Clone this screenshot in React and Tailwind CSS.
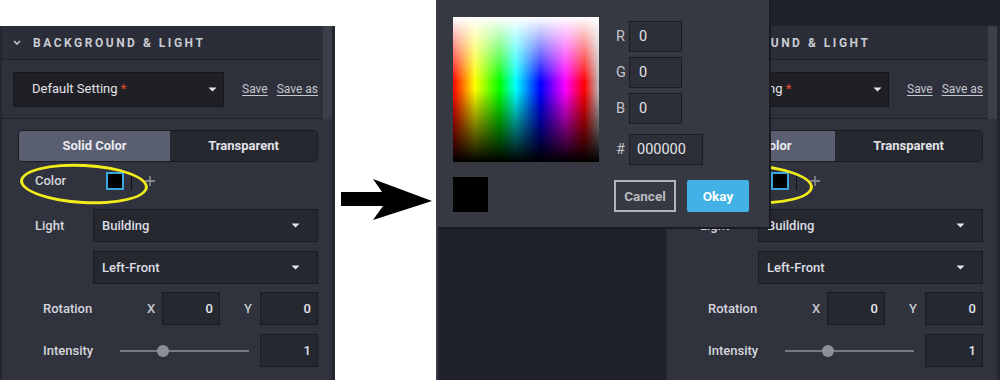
import React from "react";

function Caret() {
    return (
        <svg width="9" height="5" viewBox="0 0 9 5" className="shrink-0">
            <path d="M0.5 0.5 H8.5 L4.5 4.5 Z" fill="#e6e7ec" />
        </svg>
    );
}

function Select({ label, className }) {
    return (
        <div
            className={`flex items-center justify-between h-[33px] pl-2 pr-[17px] bg-[#262830] border border-[#1a1b21] text-[13px] font-medium text-[#dcdde3] ${className}`}
        >
            <span>{label}</span>
            <Caret />
        </div>
    );
}

function NumberBox({ value, className }) {
    return (
        <div
            className={`flex items-center justify-end h-[33px] pr-[6px] bg-[#262830] border border-[#1a1b21] text-[13px] font-medium text-[#e4e5ea] ${className}`}
        >
            {value}
        </div>
    );
}

function Panel() {
    return (
        <div className="relative w-[335px] h-[354px] bg-[#30323d] border-l-2 border-r-[3px] border-[#24262f] font-['Roboto',sans-serif] overflow-hidden">
            {/* header */}
            <div className="flex items-center h-[34px] bg-[#2b2d38] border-b border-[#1f2029]">
                <svg width="8" height="5" viewBox="0 0 8 5" className="ml-[11px] mr-[12px]">
                    <path d="M1 1 L4 4 L7 1" stroke="#c9cbd2" strokeWidth="1.5" fill="none" />
                </svg>
                <span className="text-[12px] font-bold tracking-[0.21em] text-[#c9cbd2]">
                    BACKGROUND &amp; LIGHT
                </span>
            </div>

            {/* preset */}
            <div className="flex items-center h-[59px] bg-[#2e303b] border-b border-[#1f2029]">
                <div className="flex items-center justify-between ml-[11px] w-[211px] h-[35px] pl-[18px] pr-[6px] bg-[#1f2026] border border-[#17181d] text-[13px] text-[#e2e3e8]">
                    <span>
                        Default Setting <span className="text-[#e2492e]">*</span>
                    </span>
                    <Caret />
                </div>
                <span className="ml-[18px] text-[12px] text-[#c4c6cd] underline underline-offset-2">Save</span>
                <span className="ml-[9px] text-[12px] text-[#c4c6cd] underline underline-offset-2">Save as</span>
            </div>

            {/* body */}
            <div className="relative flex flex-col pt-[11px]">
                <div className="flex ml-[16px] w-[300px] h-[32px] rounded-[4px] border border-[#1b1c22] overflow-hidden text-[13px] font-bold">
                    <div className="flex items-center justify-center w-[151px] bg-[#5a5e71] text-[#e8e9ee]">
                        Solid Color
                    </div>
                    <div className="flex items-center justify-center flex-1 bg-[#262830] text-[#e2e3e8]">
                        Transparent
                    </div>
                </div>

                <div className="flex items-center mt-[10px] h-[18px] pl-[33px] text-[13px] font-medium text-[#d5d6dc]">
                    <span className="w-[71px]">Color</span>
                    <div className="w-[18px] h-[18px] border-2 border-[#3aa8de] bg-black" />
                    <div className="ml-[7px] w-[1px] h-[17px] bg-[#111217]" />
                    <svg width="10" height="10" viewBox="0 0 10 10" className="ml-[13px]">
                        <path d="M5 0 V10 M0 5 H10" stroke="#9a9ca3" strokeWidth="1.3" />
                    </svg>
                </div>

                <div className="flex items-center mt-[19px] pl-[33px] text-[13px] font-medium text-[#d5d6dc]">
                    <span className="w-[58px]">Light</span>
                    <Select label="Building" className="w-[225px]" />
                </div>

                <div className="flex mt-[9px] pl-[91px]">
                    <Select label="Left-Front" className="w-[225px]" />
                </div>

                <div className="flex items-center mt-[8px] pl-[41px] text-[13px] font-medium text-[#d5d6dc]">
                    <span className="w-[104px]">Rotation</span>
                    <span className="w-[15px] text-[#c4c6cd]">X</span>
                    <NumberBox value="0" className="w-[58px]" />
                    <span className="w-[40px] pl-[24px] text-[#c4c6cd]">Y</span>
                    <NumberBox value="0" className="w-[58px]" />
                </div>

                <div className="flex items-center mt-[9px] pl-[41px] text-[13px] font-medium text-[#d5d6dc]">
                    <span className="w-[77px]">Intensity</span>
                    <div className="relative flex items-center w-[129px] h-[12px]">
                        <div className="w-full h-[2px] bg-[#777982]" />
                        <div className="absolute left-[37px] w-[12px] h-[12px] rounded-full bg-[#8d8f96]" />
                    </div>
                    <NumberBox value="1" className="ml-[11px] w-[58px]" />
                </div>

                {/* annotation */}
                <div className="absolute left-[18px] top-[45px] w-[128px] h-[40px] rounded-[50%] border-[3px] border-[#f3ec1c] rotate-[3deg]" />
            </div>

            {/* scrollbar */}
            <div className="absolute right-0 top-0 w-[9px] h-[93px] bg-[#3c3e4a]" />
        </div>
    );
}

function ColorPicker() {
    return (
        <div className="absolute left-0 top-0 w-[333px] h-[229px] bg-[#363842] border-b-2 border-r-2 border-[#1b1c23] flex pl-[15px] pt-[17px] font-['Roboto',sans-serif]">
            <div className="flex flex-col gap-[15px] w-[146px]">
                <div className="w-[146px] h-[145px] bg-[linear-gradient(to_bottom,#ffffff_0%,rgba(255,255,255,0)_45%,rgba(0,0,0,0)_50%,#000000_100%),linear-gradient(to_right,#ff0000_0%,#ffff00_15%,#00ff00_32%,#00ffff_43%,#0000ff_60%,#ff00ff_77%,#ff0000_90%,#bbbbbb_100%)]" />
                <div className="w-[35px] h-[35px] bg-black" />
            </div>
            <div className="flex flex-col ml-[15px] pt-[4px] text-[14.5px] text-[#e2e3e8]">
                {["R", "G", "B"].map((c) => (
                    <div key={c} className="flex items-center mb-[5px]">
                        <span className="w-[15px] pl-[2px] text-[#c2c4cb]">{c}</span>
                        <div className="flex items-center w-[53px] h-[31px] pl-[9px] bg-[#2d2f38] border border-[#1c1d23]">0</div>
                    </div>
                ))}
                <div className="flex items-center mt-[5px]">
                    <span className="w-[15px] pl-[2px] text-[#c2c4cb]">#</span>
                    <div className="flex items-center w-[74px] h-[31px] pl-[7px] bg-[#2d2f38] border border-[#1c1d23]">000000</div>
                </div>
                <div className="flex mt-[15px] gap-[11px] text-[13.5px] font-bold">
                    <div className="flex items-center justify-center w-[62px] h-[32px] border-2 border-[#b3b5bb] text-[#b9bbc1]">
                        Cancel
                    </div>
                    <div className="flex items-center justify-center w-[62px] h-[32px] rounded-[2px] bg-[#41b1e6] text-white">
                        Okay
                    </div>
                </div>
            </div>
        </div>
    );
}

export default function App() {
    return (
        <div className="flex w-[1000px] h-[380px] bg-white overflow-hidden">
            <div className="w-[335px] pt-[26px] shrink-0">
                <Panel />
            </div>

            <div className="w-[101px] shrink-0">
                <svg width="101" height="380" viewBox="0 0 101 380">
                    <polygon points="6,192 47,192 38,179 97,201 38,220 48,206 6,206" fill="#000" />
                </svg>
            </div>

            <div className="relative flex justify-end w-[564px] pt-[26px] bg-[#1f212c] border-l-2 border-[#3a3c47] shrink-0">
                <Panel />
                <ColorPicker />
            </div>
        </div>
    );
}
